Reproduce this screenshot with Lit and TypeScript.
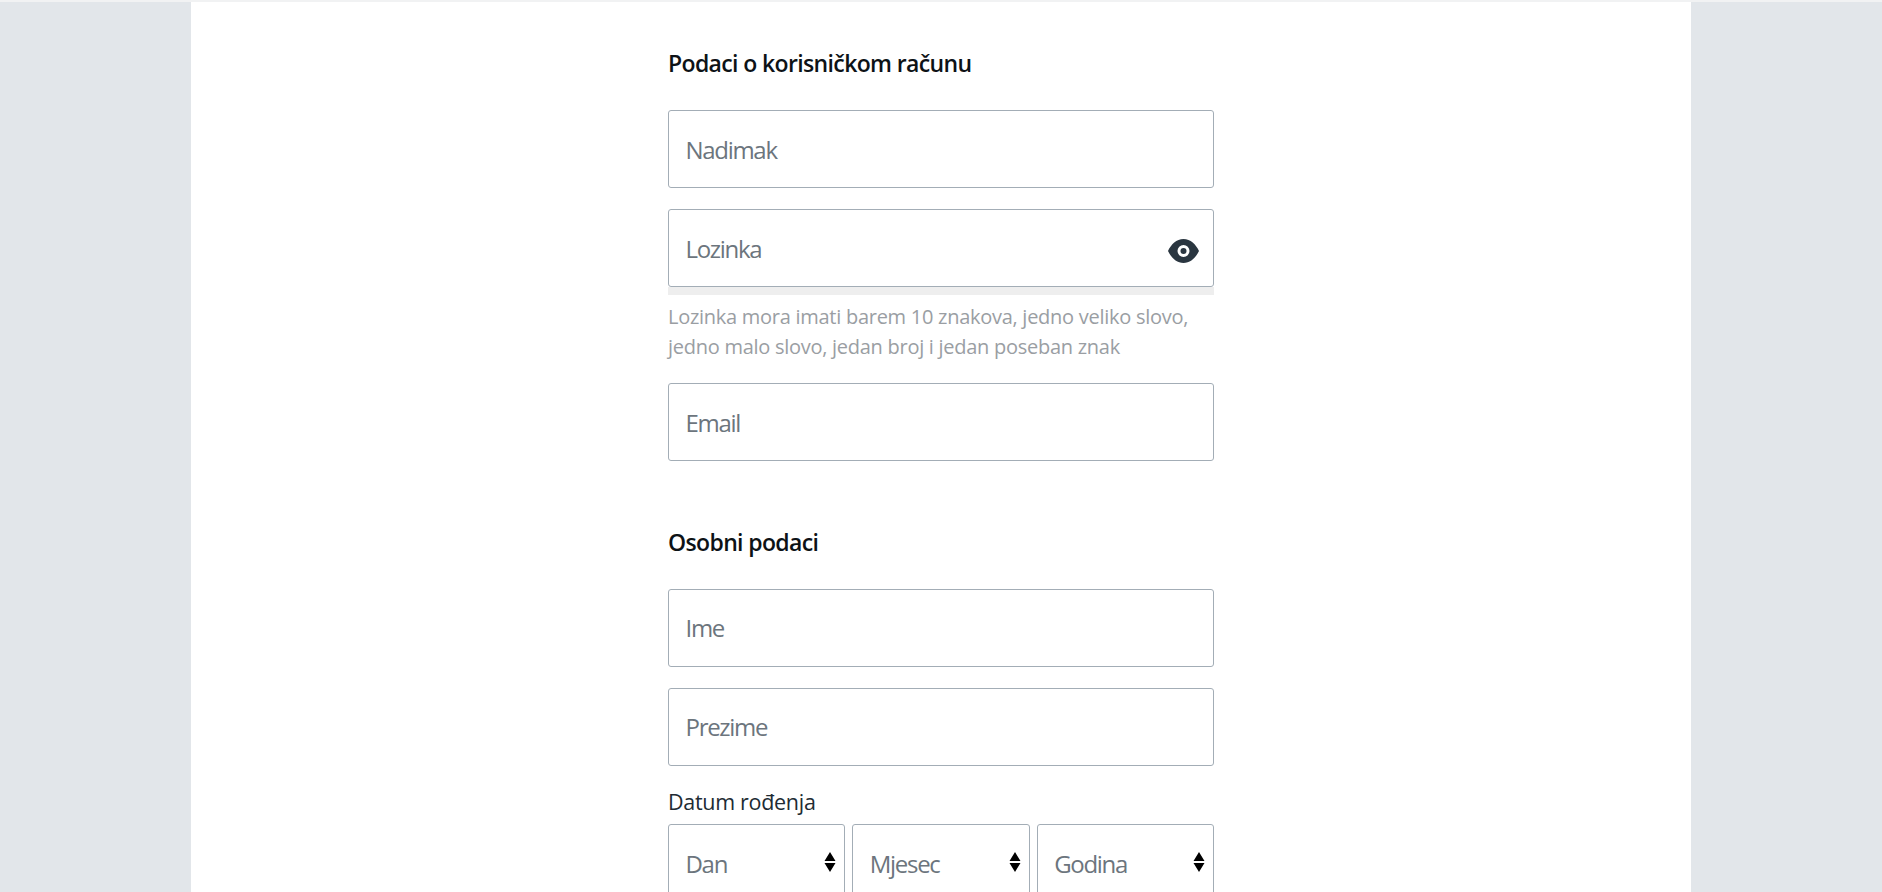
import { LitElement, html, css } from "lit";
import { customElement } from "lit/decorators.js";

const arrows = html`<svg class="arrows" viewBox="0 0 12 24" aria-hidden="true"><path d="M6 2 11.500 11H0.500Z M0.500 13H11.500L6 22Z" fill="#000"/></svg>`;

@customElement("app-root")
export class AppRoot extends LitElement {
  static styles = css`
    :host { display: block; height: 892px; overflow: hidden; background: #e2e6ea; font-family: "Open Sans", sans-serif; color: #212529; border-top: 2px solid #f1f2f3; box-sizing: border-box; }
    .panel { width: 1500px; height: 100%; margin: 0 auto; background: #fff; display: flex; justify-content: center; box-sizing: border-box; }
    .form { width: 546px; display: flex; flex-direction: column; padding-top: 44px; }
    .form > * { flex: none; }
    h2 { margin: 0; font-size: 23px; line-height: 34px; font-weight: 600; color: #0d1216; letter-spacing: -0.63px; }
    .field { position: relative; }
    input, select { display: block; width: 100%; height: 78px; box-sizing: border-box; border: 1px solid #a3adb6; border-radius: 3px; background: #fff; padding: 0 16.5px; font: 400 24px "Open Sans", sans-serif; letter-spacing: -1.3px; color: #6c757d; appearance: none; outline: none; }
    select { padding-top: 2px; }
    input::placeholder { color: #6c757d; opacity: 1; }
    .first { margin-top: 30px; }
    .next { margin-top: 21px; }
    .eye { position: absolute; right: 15px; top: 30px; width: 31px; height: 24px; fill: #2a3640; }
    .meter { height: 8px; background: #eeeeee; }
    .hint { margin: 7px 0 0; font-size: 20px; line-height: 30px; color: #9a9ea3; letter-spacing: -0.27px; }
    .email { margin-top: 21px; }
    .second { margin-top: 64px; }
    .second + .first { margin-top: 29.500px; }
    .label { margin-top: 18.5px; font-size: 21.5px; line-height: 36px; letter-spacing: -0.3px; color: #212b33; }
    .dob { margin-top: 3.5px; display: grid; grid-template-columns: repeat(3, 1fr); gap: 7px; }
    .arrows { position: absolute; right: 9px; top: 26px; width: 12px; height: 24px; pointer-events: none; }
  `;
  render() {
    return html`<div class="panel"><form class="form">
      <h2>Podaci o korisničkom računu</h2>
      <div class="field first"><input placeholder="Nadimak" /></div>
      <div class="field next"><input type="password" placeholder="Lozinka" />
        <svg class="eye" viewBox="0 0 31 24"><path fill-rule="evenodd" d="M15.500 0C8.500 0 3 5.500 0 12c3 6.500 8.500 12 15.500 12S28 18.500 31 12C28 5.500 22.500 0 15.500 0zM15.500 6a6 6 0 1 1 0 12 6 6 0 0 1 0-12z"/><circle cx="15.5" cy="12" r="3"/></svg>
      </div>
      <div class="meter"></div>
      <p class="hint">Lozinka mora imati barem 10 znakova, jedno veliko slovo, jedno malo slovo, jedan broj i jedan poseban znak</p>
      <div class="field email"><input placeholder="Email" /></div>
      <h2 class="second">Osobni podaci</h2>
      <div class="field first"><input placeholder="Ime" /></div>
      <div class="field next"><input placeholder="Prezime" /></div>
      <div class="label">Datum rođenja</div>
      <div class="dob">
        <div class="field"><select><option>Dan</option></select>${arrows}</div>
        <div class="field"><select><option>Mjesec</option></select>${arrows}</div>
        <div class="field"><select><option>Godina</option></select>${arrows}</div>
      </div>
    </form></div>`;
  }
}
